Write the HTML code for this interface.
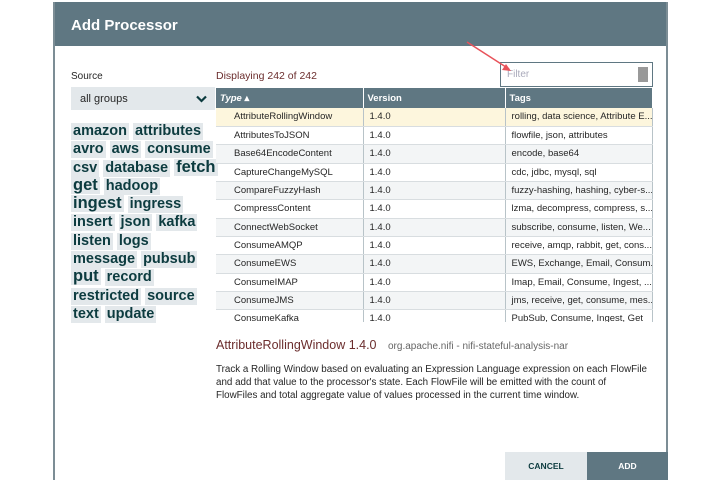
<!DOCTYPE html>
<html><head><meta charset="utf-8"><style>
*{box-sizing:border-box;margin:0;padding:0}
body{width:720px;height:480px;background:#fff;font-family:"Liberation Sans",sans-serif;position:relative;overflow:hidden}
.dlg{position:absolute;left:53px;top:2px;width:615px;height:478px;background:#fff;border-left:2px solid #7c8d95;border-right:2px solid #7c8d95}
.hdr{position:absolute;left:0;top:0;right:0;height:44px;background:#5f7782;color:#fff;font-weight:bold;font-size:15px;padding:15px 0 0 16px}
.lbl{position:absolute;font-size:10px;color:#262626}
.sel{position:absolute;left:16px;top:85px;width:144px;height:23px;background:#e3e8eb;font-size:11px;color:#262626;padding:6px 0 0 9px}
.tags{position:absolute;left:16px;top:120px;width:170px;line-height:18.3px;white-space:nowrap}
.tags span{display:inline-block;background:#e3e8eb;color:#0c3b3f;font-weight:bold;padding:0 2px;margin-right:4px;height:17px;line-height:17px;font-size:14.5px}
.tags span.b{font-size:16.5px}
table{position:absolute;left:161px;top:86px;width:437px;border-collapse:collapse;table-layout:fixed;font-size:9.5px;color:#262626}
th{background:#5f7782;color:#fff;text-align:left;font-size:9.5px;height:20px;padding-left:4px;border-right:1px solid #fff}
td{height:18.35px;border-bottom:1px solid #d8dde0;border-right:1px solid #b8c3c8;padding-left:6px;white-space:nowrap;overflow:hidden}
td:first-child{padding-left:18px}
tr:nth-child(even) td{background:#f3f5f6}
tr.s td{background:#fdf6dd}
.clip{position:absolute;left:0;top:0;width:100%;height:320px;overflow:hidden}
</style></head><body>
<div class="dlg">
<div class="hdr">Add Processor</div>
<div class="lbl" style="left:16px;top:69px">Source</div>
<div class="sel">all groups<svg style="position:absolute;right:8px;top:8px" width="11" height="8" viewBox="0 0 11 8"><path d="M1 1.5l4.5 4.5 4.5-4.5" stroke="#0c3b3f" stroke-width="2.2" fill="none"/></svg></div>
<div class="tags">
<span>amazon</span><span>attributes</span><br>
<span>avro</span><span>aws</span><span>consume</span><br>
<span>csv</span><span>database</span><span class="b">fetch</span><br>
<span class="b">get</span><span>hadoop</span><br>
<span class="b">ingest</span><span>ingress</span><br>
<span>insert</span><span>json</span><span>kafka</span><br>
<span>listen</span><span>logs</span><br>
<span>message</span><span>pubsub</span><br>
<span class="b">put</span><span>record</span><br>
<span>restricted</span><span>source</span><br>
<span>text</span><span>update</span>
</div>
<div class="lbl" style="left:161px;top:68px;color:#6b2d2d;font-size:10.5px">Displaying 242 of 242</div>
<div style="position:absolute;left:445px;top:60px;width:153px;height:25px;border:1px solid #5f7782;font-size:10px;color:#aab;padding:6px 0 0 6px">Filter<div style="position:absolute;right:4px;top:4px;width:10px;height:15px;background:#999"></div></div>
<svg style="position:absolute;left:410px;top:38px" width="50" height="35"><path d="M2 2L44 29" stroke="#e8525a" stroke-width="1.5"/><path d="M46 31l-9-1 4-6z" fill="#e8525a"/></svg>
<div class="clip">
<table>
<colgroup><col style="width:147px"><col style="width:142px"><col></colgroup>
<tr><th><i>Type</i> ▴</th><th>Version</th><th>Tags</th></tr>
<tr class="s"><td>AttributeRollingWindow</td><td>1.4.0</td><td>rolling, data science, Attribute E...</td></tr>
<tr><td>AttributesToJSON</td><td>1.4.0</td><td>flowfile, json, attributes</td></tr>
<tr><td>Base64EncodeContent</td><td>1.4.0</td><td>encode, base64</td></tr>
<tr><td>CaptureChangeMySQL</td><td>1.4.0</td><td>cdc, jdbc, mysql, sql</td></tr>
<tr><td>CompareFuzzyHash</td><td>1.4.0</td><td>fuzzy-hashing, hashing, cyber-s...</td></tr>
<tr><td>CompressContent</td><td>1.4.0</td><td>lzma, decompress, compress, s...</td></tr>
<tr><td>ConnectWebSocket</td><td>1.4.0</td><td>subscribe, consume, listen, We...</td></tr>
<tr><td>ConsumeAMQP</td><td>1.4.0</td><td>receive, amqp, rabbit, get, cons...</td></tr>
<tr><td>ConsumeEWS</td><td>1.4.0</td><td>EWS, Exchange, Email, Consum...</td></tr>
<tr><td>ConsumeIMAP</td><td>1.4.0</td><td>Imap, Email, Consume, Ingest, ...</td></tr>
<tr><td>ConsumeJMS</td><td>1.4.0</td><td>jms, receive, get, consume, mes...</td></tr>
<tr><td>ConsumeKafka</td><td>1.4.0</td><td>PubSub, Consume, Ingest, Get</td></tr>
</table>
</div>
<div style="position:absolute;left:161px;top:336px;font-size:12.5px;color:#6b2d2d">AttributeRollingWindow 1.4.0 <span style="font-size:10px;color:#666;margin-left:8px">org.apache.nifi - nifi-stateful-analysis-nar</span></div>
<div style="position:absolute;left:161px;top:361px;width:432px;font-size:9.8px;line-height:13px;color:#262626">Track a Rolling Window based on evaluating an Expression Language expression on each FlowFile and add that value to the processor's state. Each FlowFile will be emitted with the count of FlowFiles and total aggregate value of values processed in the current time window.</div>
<div style="position:absolute;left:450px;top:450px;width:82px;height:28px;background:#e3e8eb;color:#0c3b3f;font-size:8.5px;font-weight:bold;text-align:center;line-height:28px">CANCEL</div>
<div style="position:absolute;left:532px;top:450px;width:81px;height:28px;background:#5f7782;color:#fff;font-size:8.5px;font-weight:bold;text-align:center;line-height:28px">ADD</div>
</div>
</body></html>
